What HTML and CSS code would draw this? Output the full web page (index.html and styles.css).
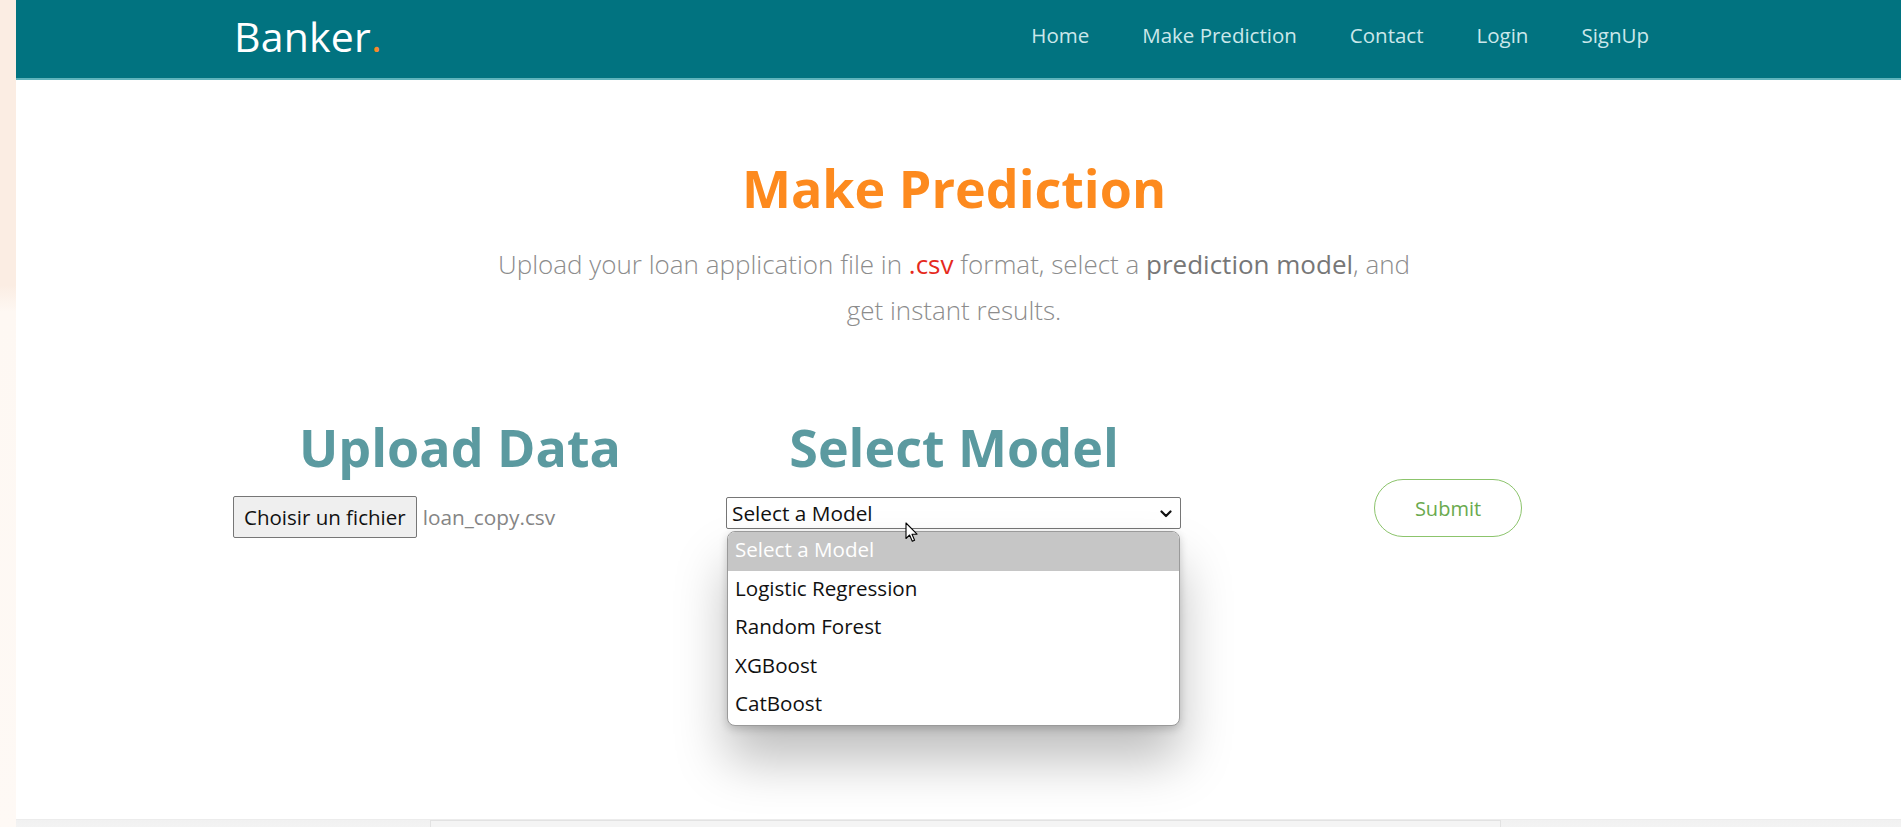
FILE: index.html
```html
<!DOCTYPE html>
<html lang="en">
<head>
<meta charset="utf-8">
<title>Banker - Make Prediction</title>
<link rel="stylesheet" href="styles.css">
</head>
<body>
<div class="shell">
  <aside class="edge"></aside>
  <div class="page">
    <header class="navbar">
      <div class="nav-inner">
        <a class="brand" href="#">Banker<span class="dot">.</span></a>
        <nav class="links">
          <a href="#">Home</a>
          <a href="#">Make Prediction</a>
          <a href="#">Contact</a>
          <a href="#">Login</a>
          <a href="#">SignUp</a>
        </nav>
      </div>
    </header>

    <main class="predict">
      <h1 class="title">Make Prediction</h1>
      <p class="lead">Upload your loan application file in <span class="csv">.csv</span> format, select a <span class="em">prediction model</span>, and get instant results.</p>

      <form class="form-grid">
        <h2 class="col-head">Upload Data</h2>
        <h2 class="col-head">Select Model</h2>
        <div class="spacer"></div>

        <div class="file">
          <span class="file-btn">Choisir un fichier</span>
          <span class="file-name">loan_copy.csv</span>
        </div>

        <div class="select-wrap">
          <div class="select">
            <span>Select a Model</span>
            <svg class="chev" width="12" height="8" viewBox="0 0 12 8"><path d="M1.5 1.5 L6 6 L10.5 1.5" fill="none" stroke="#111" stroke-width="2.2" stroke-linecap="round" stroke-linejoin="round"/></svg>
          </div>
          <ul class="options">
            <li class="selected">Select a Model</li>
            <li>Logistic Regression</li>
            <li>Random Forest</li>
            <li>XGBoost</li>
            <li>CatBoost</li>
          </ul>
          <svg class="cursor" width="14" height="21" viewBox="0 0 14 21"><path d="M1 1 L1 16.5 L4.6 13 L7.3 19.2 L9.6 18.2 L7 12.2 L12 12.2 Z" fill="#fff" stroke="#000" stroke-width="1.1" stroke-linejoin="round"/></svg>
        </div>

        <div class="submit-cell">
          <button type="button" class="submit">Submit</button>
        </div>
      </form>
    </main>

    <section class="results">
      <div class="result-card"></div>
    </section>
  </div>
</div>
</body>
</html>
```

FILE: styles.css
```css
* { box-sizing: border-box; }

html, body {
  margin: 0;
  padding: 0;
  background: #ffffff;
  font-family: "Open Sans", "Noto Sans", Arial, sans-serif;
  overflow: hidden;
}

.shell {
  display: flex;
  min-height: 827px;
}

.edge {
  width: 16px;
  flex: 0 0 16px;
  background: linear-gradient(to bottom, #fbede3 0px, #fbede3 285px, #fef8f3 312px, #fef9f5 100%);
}

.page {
  flex: 1;
  display: flex;
  flex-direction: column;
  background: #fff;
}

/* ---------- navbar ---------- */
.navbar {
  height: 80px;
  background: #017380;
  border-bottom: 2px solid #5fb4bc;
}

.nav-inner {
  width: 1449px;
  height: 100%;
  margin: 0 auto;
  padding-right: 34px;
  display: flex;
  align-items: center;
  justify-content: space-between;
}

.brand {
  font-size: 41px;
  font-weight: 400;
  color: #ffffff;
  text-decoration: none;
  letter-spacing: 0.2px;
  margin-top: -6px;
}

.brand .dot { color: #f7892a; }

.links {
  display: flex;
  gap: 53px;
  margin-top: -8px;
}

.links a {
  font-size: 20.5px;
  color: #cbe7ea;
  text-decoration: none;
}

/* ---------- prediction section ---------- */
.predict {
  min-height: 739px;
  padding: 72px 9px 0 0;
  display: flex;
  flex-direction: column;
  align-items: center;
}

.title {
  margin: 0;
  font-size: 52px;
  line-height: 71px;
  font-weight: 700;
  color: #fd8a1e;
}

.lead {
  margin: 18px 0 0;
  width: 935px;
  text-align: center;
  font-size: 26px;
  line-height: 46px;
  font-weight: 300;
  color: #8c8c8c;
}

.lead .csv { color: #e52a1d; font-weight: 400; }
.lead .em { color: #777777; font-weight: 400; }

.form-grid {
  margin-top: 78px;
  width: 1482px;
  display: grid;
  grid-template-columns: repeat(3, 1fr);
  grid-template-rows: auto auto;
  row-gap: 14px;
}

.col-head {
  margin: 0;
  text-align: center;
  font-size: 52px;
  line-height: 71px;
  font-weight: 700;
  color: #5b9aa0;
}

.file {
  padding: 0 20px;
  display: flex;
  align-items: center;
  gap: 6px;
}

.file-btn {
  height: 42px;
  display: inline-flex;
  align-items: center;
  padding: 0 10px;
  background: #efefef;
  border: 1px solid #767676;
  border-radius: 2px;
  font-size: 20.5px;
  color: #111;
}

.file-name {
  font-size: 20.8px;
  color: #858585;
}

.select-wrap {
  position: relative;
  padding: 1px 20px 0 19px;
}

.select {
  height: 32px;
  border: 1px solid #767676;
  border-radius: 2px;
  background: #fff;
  display: flex;
  align-items: center;
  justify-content: space-between;
  padding: 0 8px 0 5px;
  font-size: 20.8px;
  color: #111;
}

.chev { margin-top: 1px; }

.options {
  position: absolute;
  left: 20px;
  right: 21px;
  top: 35px;
  margin: 0;
  padding: 0;
  list-style: none;
  background: #fff;
  border: 1px solid #9a9a9a;
  border-radius: 8px;
  overflow: hidden;
  box-shadow: 0 34px 52px rgba(0, 0, 0, 0.26), 0 3px 8px rgba(0, 0, 0, 0.18);
  z-index: 5;
}

.options li {
  height: 38.6px;
  line-height: 35.5px;
  padding-left: 7px;
  font-size: 20.6px;
  color: #111;
}

.options li.selected {
  background: #c6c6c6;
  color: #fff;
}

.cursor {
  position: absolute;
  left: 198px;
  top: 26px;
  z-index: 6;
}

.submit-cell {
  display: flex;
  justify-content: center;
  align-items: flex-start;
  margin-top: -17px;
}

.submit {
  width: 148px;
  height: 58px;
  background: #fff;
  border: 1.5px solid #8cc46c;
  border-radius: 29px;
  font-family: "Open Sans", "Noto Sans", Arial, sans-serif;
  font-size: 20px;
  color: #6aaa4e;
  padding: 0;
}

/* ---------- results ---------- */
.results {
  flex: 1;
  background: linear-gradient(to bottom, #f1f1f1, #f6f6f6);
  border-top: 1px solid #ececec;
}

.result-card {
  margin-left: 414px;
  width: 1071px;
  height: 20px;
  border: 1px solid #e2e2e2;
  background: #f4f4f4;
}
```
